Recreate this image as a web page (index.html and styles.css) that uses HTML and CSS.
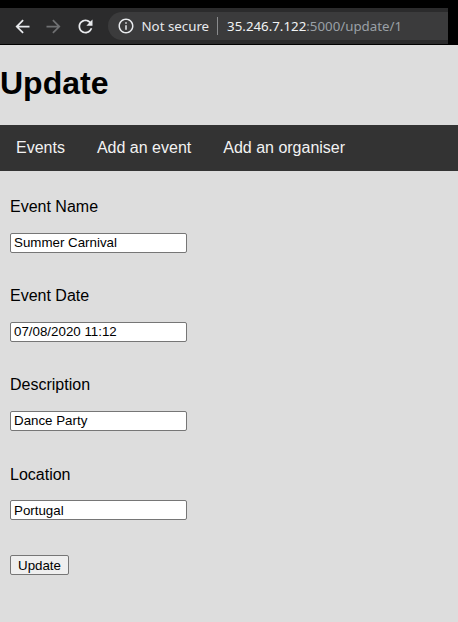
FILE: index.html
```html
<!DOCTYPE html>
<html>
<head>
<meta charset="utf-8">
<title>Update</title>
<link rel="stylesheet" href="styles.css">
</head>
<body>
<div class="chrome">
  <div class="topstrip"></div>
  <div class="toolbar">
    <span class="navbtn">
      <svg width="21" height="21" viewBox="0 0 24 24"><path fill="#e8eaed" d="M20 11H7.830l5.590-5.590L12 4l-8 8 8 8 1.410-1.410L7.830 13H20v-2z"/></svg>
    </span>
    <span class="navbtn">
      <svg width="21" height="21" viewBox="0 0 24 24"><path fill="#6f7072" d="M4 11h12.17l-5.59-5.59L12 4l8 8-8 8-1.41-1.41L16.17 13H4v-2z"/></svg>
    </span>
    <span class="navbtn">
      <svg width="21" height="21" viewBox="0 0 24 24"><path fill="#e8eaed" d="M17.65 6.35C16.2 4.9 14.21 4 12 4c-4.42 0-7.99 3.58-7.99 8s3.57 8 7.99 8c3.73 0 6.84-2.55 7.730-6h-2.08c-.82 2.33-3.04 4-5.65 4-3.31 0-6-2.69-6-6s2.69-6 6-6c1.66 0 3.14.69 4.22 1.78L13 11h7V4l-2.35 2.35z"/></svg>
    </span>
    <div class="omnibox">
      <svg class="info" width="18" height="18" viewBox="0 0 24 24"><path fill="#e8eaed" d="M11 7h2v2h-2zm0 4h2v6h-2zm1-9C6.48 2 2 6.48 2 12s4.48 10 10 10 10-4.48 10-10S17.52 2 12 2zm0 18c-4.41 0-8-3.59-8-8s3.59-8 8-8 8 3.590 8 8-3.590 8-8 8z"/></svg>
      <span class="secure">Not secure</span>
      <span class="divider"></span>
      <span class="url"><span class="host">35.246.7.122</span><span class="path">:5000/update/1</span></span>
    </div>
  </div>
</div>

<h1 class="title">Update</h1>

<nav class="topnav">
  <a href="#">Events</a>
  <a href="#">Add an event</a>
  <a href="#">Add an organiser</a>
</nav>

<form class="form">
  <div class="field">
    <label>Event Name</label>
    <input type="text" value="Summer Carnival">
  </div>
  <div class="field">
    <label>Event Date</label>
    <input type="text" value="07/08/2020 11:12">
  </div>
  <div class="field">
    <label>Description</label>
    <input type="text" value="Dance Party">
  </div>
  <div class="field">
    <label>Location</label>
    <input type="text" value="Portugal">
  </div>
  <button type="button" class="submit">Update</button>
</form>
</body>
</html>
```

FILE: styles.css
```css
html, body {
  margin: 0;
  padding: 0;
  background: #dddddd;
  font-family: "Liberation Sans", Arial, sans-serif;
  color: #000;
}

.chrome {
  height: 45px;
  background: #000;
  width: 458px;
}

.topstrip {
  height: 8px;
  background: #000;
}

.toolbar {
  height: 36px;
  width: 448px;
  background: #2b2b2c;
  display: flex;
  align-items: center;
  box-sizing: border-box;
  padding-left: 6px;
}

.navbtn {
  width: 32px;
  height: 28px;
  display: flex;
  align-items: center;
  justify-content: center;
  margin-right: -0.5px;
}

.omnibox {
  margin-left: 7px;
  flex: 1;
  height: 28px;
  background: #3b3b3c;
  border-radius: 14px 0 0 14px;
  display: flex;
  align-items: center;
  padding-left: 9px;
  font-family: "Noto Sans", "Open Sans", sans-serif;
  font-size: 13.3px;
  white-space: nowrap;
  overflow: hidden;
}

.info {
  flex: none;
}

.secure {
  color: #e8eaed;
  margin-left: 7px;
}

.divider {
  width: 1px;
  height: 18px;
  background: #8a8b8d;
  margin: 0 9px 0 8px;
}

.host {
  color: #f1f3f4;
}

.path {
  color: #9aa0a6;
}

.title {
  font-size: 32px;
  font-weight: bold;
  margin: 20px 0 23px;
  line-height: 37px;
}

.topnav {
  background: #333333;
  display: flex;
  overflow: hidden;
}

.topnav a {
  color: #f2f2f2;
  text-decoration: none;
  font-size: 16px;
  padding: 14px 16px;
  line-height: 18px;
}

.form {
  padding: 27px 10px 20px;
  display: flex;
  flex-direction: column;
  align-items: flex-start;
}

.field {
  display: flex;
  flex-direction: column;
  align-items: flex-start;
  gap: 16px;
  margin-bottom: 34.7px;
}

.field:last-of-type {
  margin-bottom: 35px;
}

.field label {
  font-size: 16px;
  line-height: 18.5px;
}

.field input {
  width: 177px;
  height: 20px;
  box-sizing: border-box;
  border: 1px solid #767676;
  border-radius: 2px;
  background: #fff;
  padding: 1px 3px;
  font-family: "Liberation Sans", Arial, sans-serif;
  font-size: 13.33px;
  color: #000;
  margin: 0;
}

.submit {
  font-family: "Liberation Sans", Arial, sans-serif;
  font-size: 13.33px;
  height: 20px;
  padding: 1px 7px;
  border: 1px solid #767676;
  border-radius: 2px;
  background: #efefef;
  color: #000;
  margin: 0;
  line-height: 15px;
}
```
